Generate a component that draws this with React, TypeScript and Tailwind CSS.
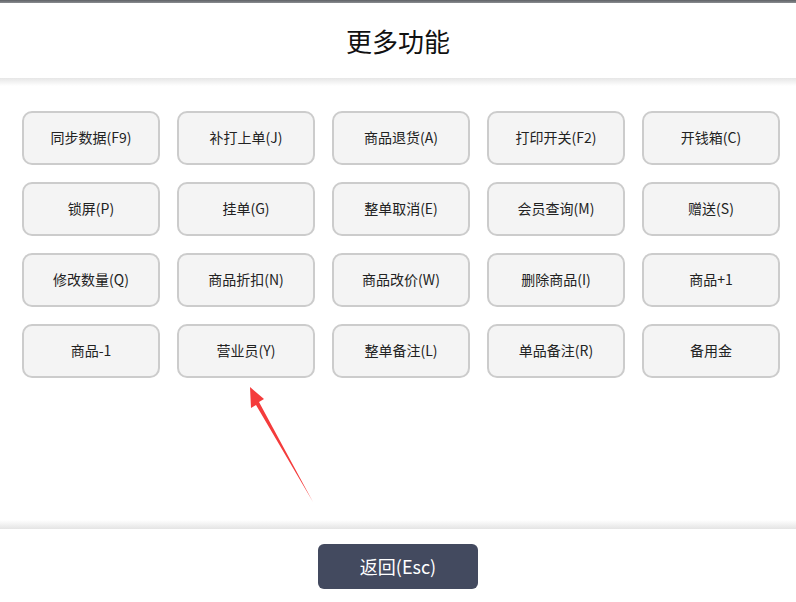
import React from "react";

const items = [
  "同步数据(F9)", "补打上单(J)", "商品退货(A)", "打印开关(F2)", "开钱箱(C)",
  "锁屏(P)", "挂单(G)", "整单取消(E)", "会员查询(M)", "赠送(S)",
  "修改数量(Q)", "商品折扣(N)", "商品改价(W)", "删除商品(I)", "商品+1",
  "商品-1", "营业员(Y)", "整单备注(L)", "单品备注(R)", "备用金",
];

export default function App() {
  return (
    <div
      className="relative w-[796px] h-[602px] bg-white flex flex-col overflow-hidden"
      style={{ fontFamily: '"Microsoft YaHei", "Noto Sans CJK SC", sans-serif' }}
    >
      <div className="h-[3px] bg-gradient-to-b from-[#5f6266] to-[#8a8d91] shrink-0" />
      <div className="h-[75px] shrink-0 flex items-center justify-center text-[26px] text-[#111]">
        更多功能
      </div>
      <div className="h-[8px] shrink-0 bg-gradient-to-b from-[#e6e6e6] to-white" />
      <div className="pt-[25px] pl-[22px]">
        <div className="grid grid-cols-[repeat(5,138px)] auto-rows-[54px] gap-x-[17px] gap-y-[17px]">
          {items.map((t) => (
            <div
              key={t}
              className="flex items-center justify-center rounded-[10px] border-2 border-[#cccccc] bg-[#f4f4f4] text-[14px] leading-none pb-[3px] text-[#222]"
            >
              {t}
            </div>
          ))}
        </div>
      </div>
      <div className="flex-1" />
      <div className="h-[9px] shrink-0 bg-gradient-to-b from-white to-[#e4e4e4]" />
      <div className="h-[73px] shrink-0 flex justify-center pt-[15px]">
        <div className="w-[160px] h-[45px] rounded-[6px] bg-[#434a5f] text-white text-[18px] leading-none pb-[1px] flex items-center justify-center">
          返回(Esc)
        </div>
      </div>
      <svg
        className="absolute left-0 top-0 pointer-events-none"
        width="796"
        height="602"
      >
        <polygon points="250,387 264,399 259,402 313,502 256,405 251,408" fill="#f43c3c" />
      </svg>
    </div>
  );
}
